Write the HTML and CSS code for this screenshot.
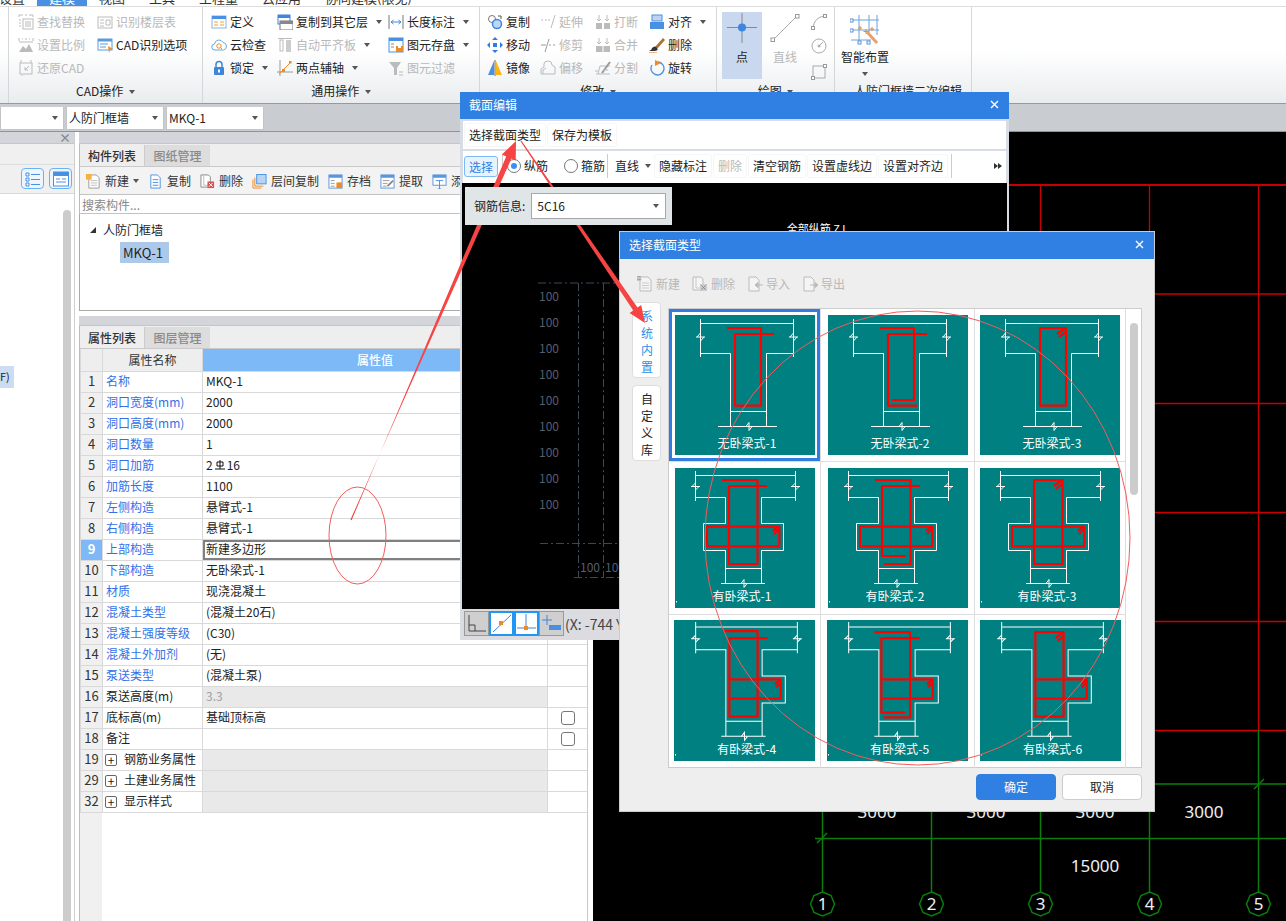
FILE: index.html
```html
<!DOCTYPE html>
<html lang="zh-CN">
<head>
<meta charset="utf-8">
<title>截面编辑</title>
<link rel="stylesheet" href="styles.css">
</head>
<body>
<svg class="defs" width="0" height="0" aria-hidden="true">
  <defs>
    <symbol id="i-find" viewBox="0 0 16 16"><path d="M1 1h4M7 1h2M11 1h4M1 1v2M15 1v2" class="sg"/><rect x="5" y="5" width="10" height="10" class="sg"/><path d="M1 6h2M1 9h2M1 12h2M7 8h6M7 10h6M7 12h6" class="sg"/></symbol>
    <symbol id="i-scale" viewBox="0 0 16 16"><path d="M1 1v3M15 1v3M4 2h1M7 2h2M11 2h1" class="sg"/><path d="M1 15l4-6 3 3 3-5 4 8z" fill="#bbb"/><path d="M1 5h14" class="sg"/></symbol>
    <symbol id="i-restore" viewBox="0 0 16 16"><rect x="2" y="3" width="12" height="11" class="sg"/><path d="M3 0v3M13 0v3M11 6L7 10V7M7 10h3M4 15v1" class="sg"/></symbol>
    <symbol id="i-floor" viewBox="0 0 16 16"><rect x="1" y="3" width="14" height="11" class="sg"/><path d="M3 6h4M3 9h4M3 12h4M9 6h4v5H9z" class="sg"/></symbol>
    <symbol id="i-cad" viewBox="0 0 16 16"><rect x="1" y="2" width="14" height="11" fill="#fff" stroke="#5a9bdc"/><rect x="1" y="2" width="14" height="2.5" fill="#5a9bdc"/><path d="M3 7h8M3 10h6" stroke="#5a9bdc"/><path d="M11 9l5 3-3 1-1 3z" fill="#f08a24"/></symbol>
    <symbol id="i-def" viewBox="0 0 16 16"><rect x="1" y="2" width="14" height="12" fill="#fff" stroke="#8ab4e0"/><rect x="1" y="2" width="14" height="3" fill="#4a90e2"/><path d="M3 8h4M3 11h4" stroke="#f0a040"/><path d="M9 8h4M9 11h4" stroke="#f0a040"/></symbol>
    <symbol id="i-cloud" viewBox="0 0 16 16"><path d="M4 13a3 3 0 0 1-.5-6A4.500 4.500 0 0 1 12 5.500 3.800 3.800 0 0 1 12.500 13z" fill="none" stroke="#60a8e8"/><circle cx="8" cy="9" r="2.200" fill="none" stroke="#f08a24"/><path d="M9.500 10.500L11 12" stroke="#f08a24"/></symbol>
    <symbol id="i-lock" viewBox="0 0 16 16"><path d="M5 7V4.500a3 3 0 0 1 6 0V7" fill="none" stroke="#3d86dc" stroke-width="1.500"/><rect x="3" y="7" width="10" height="8" rx="1" fill="#3d86dc"/><rect x="7" y="9.500" width="2" height="3" fill="#fff"/></symbol>
    <symbol id="i-copyfloor" viewBox="0 0 16 16"><rect x="1" y="1" width="12" height="9" fill="#fff" stroke="#3d86dc"/><rect x="1" y="1" width="12" height="3" fill="#3d86dc"/><rect x="3" y="7" width="13" height="9" fill="#fff" stroke="#777"/><rect x="3" y="7" width="13" height="3" fill="#888"/></symbol>
    <symbol id="i-autoflat" viewBox="0 0 16 16"><path d="M1 1.500h14" class="sg"/><rect x="3" y="3" width="3" height="11" class="sg"/><rect x="9" y="3" width="5" height="12" fill="#ccc"/></symbol>
    <symbol id="i-axis" viewBox="0 0 16 16"><path d="M3 0v16M0 12h16" stroke="#999"/><path d="M14 2L2 14" stroke="#f08a24"/><rect x="12" y="1" width="2.500" height="2.500" fill="#f08a24"/><rect x="5" y="9" width="3" height="3" fill="#f08a24"/></symbol>
    <symbol id="i-len" viewBox="0 0 16 16"><path d="M1 1v14M15 1v14" stroke="#777"/><path d="M3 8h10M3 8l2.500-2M3 8l2.500 2M13 8l-2.500-2M13 8l-2.500 2" fill="none" stroke="#3d86dc"/></symbol>
    <symbol id="i-save" viewBox="0 0 16 16"><rect x="1" y="1" width="14" height="14" fill="#fff" stroke="#4a90e2"/><rect x="1" y="1" width="14" height="3" fill="#4a90e2"/><path d="M3 7h3M3 10h3" stroke="#888"/><rect x="8" y="9" width="7" height="6" fill="#f08a24"/><rect x="10" y="9" width="3" height="2" fill="#fff"/></symbol>
    <symbol id="i-filter" viewBox="0 0 16 16"><path d="M1 2h12L9 8v7H6V8z" fill="#bbb"/><path d="M11 12h4M11 15h4" class="sg"/></symbol>
    <symbol id="i-copy" viewBox="0 0 16 16"><circle cx="5" cy="5" r="3.500" fill="none" stroke="#777"/><circle cx="10" cy="10" r="4.500" fill="#bcd8f5" stroke="#3d86dc" stroke-width="1.500"/><path d="M11 2h3v3" fill="none" stroke="#555"/></symbol>
    <symbol id="i-move" viewBox="0 0 16 16"><path d="M8 0l3 3H5zM8 16l3-3H5zM0 8l3-3v6zM16 8l-3-3v6z" fill="#2f7de1"/><rect x="6" y="6" width="4" height="4" fill="#2f7de1"/></symbol>
    <symbol id="i-mirror" viewBox="0 0 16 16"><path d="M7 1v14H1z" fill="#4a90e2"/><path d="M9 1v14h6z" fill="#fbb812"/><path d="M8 0v16" stroke="#666"/></symbol>
    <symbol id="i-extend" viewBox="0 0 16 16"><path d="M1 6h2M5 6h2M8 6h2" class="sg"/><path d="M15 1L11 14" class="sg"/></symbol>
    <symbol id="i-trim" viewBox="0 0 16 16"><path d="M1 8h5M9 8h2M13 8h2" stroke="#999"/><path d="M9 2L5 15" stroke="#999"/></symbol>
    <symbol id="i-offset" viewBox="0 0 16 16"><path d="M1 14V9l3-2V4q0-3 4-3t4 4l3 2v7z" class="sg"/><path d="M3 14v-4l3-2" class="sg"/></symbol>
    <symbol id="i-break" viewBox="0 0 16 16"><rect x="1" y="9" width="6" height="6" fill="#bbb"/><rect x="9" y="9" width="6" height="6" fill="#bbb"/><path d="M4 1v6M2 5l2 2 2-2M12 1v6M10 5l2 2 2-2" class="sg"/></symbol>
    <symbol id="i-merge" viewBox="0 0 16 16"><rect x="1" y="9" width="14" height="6" fill="#bbb"/><path d="M8 9v6" stroke="#fff"/><path d="M4 1v6M2 5l2 2 2-2M12 1v6M10 5l2 2 2-2" class="sg"/></symbol>
    <symbol id="i-split" viewBox="0 0 16 16"><path d="M1 14h14M3 14l2-8h10" class="sg"/><path d="M7 13L15 2" stroke="#999" stroke-width="2"/><path d="M0 11h3M8 10h5" class="sg"/></symbol>
    <symbol id="i-align" viewBox="0 0 16 16"><rect x="3" y="1" width="10" height="6" fill="#bcd4f2" stroke="#4a90e2"/><rect x="1" y="8" width="14" height="7" fill="#4a90e2"/></symbol>
    <symbol id="i-brush" viewBox="0 0 16 16"><path d="M6 10L14 1l2 2-8 9z" fill="#a8713a"/><path d="M3 11q3-3 5 0t-3 3H0q3-1 3-3z" fill="#333"/><path d="M0 16h8" stroke="#e06a10"/></symbol>
    <symbol id="i-rotate" viewBox="0 0 16 16"><path d="M9 2a6.500 6.500 0 1 1-6 3" fill="none" stroke="#4a90e2" stroke-width="1.300"/><path d="M6 0l6 3-6 3z" fill="#f08a24"/></symbol>
    <symbol id="i-point" viewBox="0 0 30 30"><path d="M0 14.500h30M15 0v30" stroke="#888"/><circle cx="15" cy="14.500" r="4" fill="#3d86dc"/></symbol>
    <symbol id="i-line" viewBox="0 0 30 30"><path d="M3 27L27 3" stroke="#aaa"/><rect x="1" y="25" width="3.500" height="3.500" fill="#fff" stroke="#999"/><rect x="25.500" y="1.500" width="3.500" height="3.500" fill="#fff" stroke="#999"/></symbol>
    <symbol id="i-arc" viewBox="0 0 16 16"><path d="M2 14Q3 3 14 2" fill="none" stroke="#aaa"/><rect x="0.500" y="12.500" width="3" height="3" fill="#fff" stroke="#999"/><rect x="12.500" y="0.500" width="3" height="3" fill="#fff" stroke="#999"/></symbol>
    <symbol id="i-circle" viewBox="0 0 16 16"><circle cx="8" cy="8" r="7" fill="none" stroke="#aaa"/><circle cx="8" cy="8" r="1" fill="none" stroke="#999"/><path d="M8 8l4-4" stroke="#aaa"/></symbol>
    <symbol id="i-rect" viewBox="0 0 16 16"><rect x="2" y="2" width="12" height="12" fill="none" stroke="#aaa"/><rect x="0.500" y="12.500" width="3" height="3" fill="#fff" stroke="#999"/><rect x="12.500" y="0.500" width="3" height="3" fill="#fff" stroke="#999"/></symbol>
    <symbol id="i-smart" viewBox="0 0 30 30"><path d="M1 5h28M1 15h28M1 25h20M9 0v28M19 0v20M27 0v20" stroke="#6aa2e0"/><rect x="0" y="4" width="3" height="3" fill="#fff" stroke="#5a92d8"/><rect x="0" y="14" width="3" height="3" fill="#fff" stroke="#5a92d8"/><rect x="8" y="26" width="3" height="3" fill="#fff" stroke="#5a92d8"/><rect x="17" y="26" width="3" height="3" fill="#fff" stroke="#5a92d8"/><path d="M17 17L27 28" stroke="#e8a070" stroke-width="3"/><path d="M16 14v5M13.500 16.500h5M10 11v4M8 13h4M22 12v4M20 14h4" stroke="#f08a24"/></symbol>
    <symbol id="i-new" viewBox="0 0 16 16"><path d="M3 1h8l3 3v11H3z" fill="#fff" stroke="#999"/><path d="M5 7h7M5 9.500h7M5 12h7" stroke="#bbb"/><rect x="0" y="0" width="6" height="6" fill="#f6b040"/></symbol>
    <symbol id="i-dup" viewBox="0 0 16 16"><path d="M3 1h7l3 3v11H3z" fill="#fff" stroke="#4a90e2"/><path d="M5 6h6M5 9h6M5 12h6" stroke="#4a90e2"/></symbol>
    <symbol id="i-del" viewBox="0 0 16 16"><path d="M1 1h8l2 2v11H1z" fill="#fff" stroke="#888"/><path d="M4 1v11h7" fill="none" stroke="#bbb"/><rect x="8" y="8" width="7" height="7" fill="#d85050"/><path d="M9.500 9.500l4 4M13.500 9.500l-4 4" stroke="#fff"/></symbol>
    <symbol id="i-floorcopy" viewBox="0 0 16 16"><path d="M1 6v9h9M3 4v9h9" fill="none" stroke="#f08a24"/><rect x="5" y="0.500" width="10" height="10" fill="#b8d4f5" stroke="#4a90e2"/></symbol>
    <symbol id="i-archive" viewBox="0 0 16 16"><rect x="1" y="1" width="14" height="14" fill="#fff" stroke="#5a96dc"/><rect x="1" y="1" width="14" height="3" fill="#5a96dc"/><path d="M3 7h4M3 10h4M3 13h4" stroke="#999"/><rect x="9" y="9" width="6" height="6" fill="#f08a24"/></symbol>
    <symbol id="i-extract" viewBox="0 0 16 16"><rect x="1" y="1" width="14" height="14" fill="#fff" stroke="#5a96dc"/><rect x="1" y="1" width="14" height="3" fill="#5a96dc"/><path d="M3 7h7M3 10h5M3 13h4" stroke="#999"/><path d="M8 13l6-6" stroke="#888" stroke-width="2"/></symbol>
    <symbol id="i-add" viewBox="0 0 16 16"><rect x="1" y="1" width="14" height="11" fill="#fff" stroke="#5a96dc"/><rect x="1" y="1" width="14" height="3" fill="#5a96dc"/><path d="M4 7h8M8 7v9M6 16h4" stroke="#4a90e2"/></symbol>
    <symbol id="i-newg" viewBox="0 0 16 16"><path d="M3 1h8l3 3v11H3z" fill="#f4f4f4" stroke="#bbb"/><path d="M5 7h7M5 9.500h7M5 12h7" stroke="#ccc"/><path d="M0 0h4v1H0zM0 3h4v1H0zM1 0v5M3 0v5" stroke="#bbb"/></symbol>
    <symbol id="i-delg" viewBox="0 0 16 16"><path d="M1 1h8l2 2v11H1z" fill="#f4f4f4" stroke="#bbb"/><path d="M4 1v11h7" fill="none" stroke="#ccc"/><rect x="8" y="8" width="7" height="7" fill="#ccc"/><path d="M9.500 9.500l4 4M13.500 9.500l-4 4" stroke="#888"/></symbol>
    <symbol id="i-impg" viewBox="0 0 16 16"><path d="M2 1h7l3 3v11H2z" fill="#f4f4f4" stroke="#bbb"/><path d="M16 9H8M11 6.500L8 9l3 2.500z" fill="#bbb" stroke="#bbb"/></symbol>
    <symbol id="i-expg" viewBox="0 0 16 16"><path d="M2 1h7l3 3v11H2z" fill="#f4f4f4" stroke="#bbb"/><path d="M8 9h8M13 6.500L16 9l-3 2.500z" fill="#bbb" stroke="#bbb"/></symbol>
    <symbol id="i-list" viewBox="0 0 16 16"><path d="M1 2h3v3H1zM1 7h3v3H1zM1 12h3v3H1zM6 3.500h9M6 8.500h9M6 13.500h9" fill="none" stroke="#4a90e2"/></symbol>
    <symbol id="i-card" viewBox="0 0 16 16"><rect x="0.500" y="1" width="15" height="14" fill="#fff" stroke="#4a90e2"/><rect x="0.500" y="1" width="15" height="4" fill="#4a90e2"/><path d="M3 8h4M9 8h4M3 11h10" stroke="#4a90e2"/></symbol>
    <symbol id="i-ortho" viewBox="0 0 25 25"><path d="M5 4v16h17M5 14h6v6" fill="none" stroke="#444"/></symbol>
    <symbol id="i-mid" viewBox="0 0 25 25"><path d="M4 21L22 4" stroke="#3d86dc"/><rect x="10" y="10" width="4" height="4" fill="#f08a24"/></symbol>
    <symbol id="i-perp" viewBox="0 0 25 25"><path d="M3 17h19M12 3v14" stroke="#3d86dc"/><rect x="10" y="15" width="4" height="4" fill="#f08a24"/></symbol>
    <symbol id="i-plus" viewBox="0 0 25 25"><path d="M3 9h10M8 4v10" stroke="#3d86dc"/><rect x="10" y="14" width="12" height="5" fill="#4a90e2"/></symbol>

    <g id="wa" fill="none" stroke="#fff">
      <path d="M25.500 4V42M118.500 4V42M25.500 8.500H118.500M25.500 38.500H55.500V111.500M118.500 38.500H91.500V111.500M55.500 96.500H91.500M43 111.500H102"/>
      <path d="M21 22h9M25.500 18l-3.500 4M25.500 26l3.500-4M114 22h9M118.500 18l-3.500 4M118.500 26l3.500-4M71 111.500l3-4v8l3-4"/>
    </g>
    <g id="wb" fill="none" stroke="#fff">
      <path d="M20.500 3V33M120.500 3V33M20.500 7.500H120.500M20.500 29.500H50.500V55.500H28.500V82.500H50.500V115.500M120.500 29.500H86.500V55.500H108.500V82.500H86.500V115.500M50.500 100.500H86.500M46 115.500H90"/>
      <path d="M16 18.500h9M20.500 15l-3.500 3.500M20.500 22l3.500-3.500M116 18.500h9M120.500 15l-3.500 3.500M120.500 22l3.500-3.500M66 115.500l3-4v8l3-4"/>
      <path d="M1.500 133v1.500"/>
    </g>
    <g id="wc" fill="none" stroke="#fff">
      <path d="M21.500 2V33M122.500 2V33M21.500 7H122.500M21.500 29.500H51.500V115.500M122.500 29.500H87.500V55.500H110.500V82.500H87.500V115.500M51.500 100.500H87.500M47 115.500H91"/>
      <path d="M17 18.500h9M21.500 15l-3.500 3.500M21.500 22l3.500-3.500M118 18.500h9M122.500 15l-3.500 3.500M122.500 22l3.500-3.500M67 115.500l3-4v8l3-4"/>
      <path d="M1.500 133v1.500"/>
    </g>
  </defs>
</svg>

<header class="tabs">
  <span class="tab tab-first">设置</span><span class="tab tab-on">建模</span><span class="tab">视图</span><span class="tab">工具</span><span class="tab">工程量</span><span class="tab">云应用</span><span class="tab">协同建模(限免)</span>
</header>

<section class="ribbon">
  <div class="rb-group rb-cad">
    <div class="rb-cols">
      <div class="rb-item off"><svg class="ic"><use href="#i-find"/></svg>查找替换</div>
      <div class="rb-item off"><svg class="ic"><use href="#i-scale"/></svg>设置比例</div>
      <div class="rb-item off"><svg class="ic"><use href="#i-restore"/></svg>还原CAD</div>
      <div class="rb-item off"><svg class="ic"><use href="#i-floor"/></svg>识别楼层表</div>
      <div class="rb-item"><svg class="ic"><use href="#i-cad"/></svg>CAD识别选项</div>
    </div>
    <div class="rb-label">CAD操作 <i class="caret"></i></div>
  </div>
  <div class="rb-group rb-common">
    <div class="rb-cols">
      <div class="rb-item"><svg class="ic"><use href="#i-def"/></svg>定义</div>
      <div class="rb-item"><svg class="ic"><use href="#i-cloud"/></svg>云检查</div>
      <div class="rb-item"><svg class="ic"><use href="#i-lock"/></svg>锁定<i class="caret"></i></div>
      <div class="rb-item"><svg class="ic"><use href="#i-copyfloor"/></svg>复制到其它层<i class="caret"></i></div>
      <div class="rb-item off"><svg class="ic"><use href="#i-autoflat"/></svg>自动平齐板<i class="caret"></i></div>
      <div class="rb-item"><svg class="ic"><use href="#i-axis"/></svg>两点辅轴<i class="caret"></i></div>
      <div class="rb-item"><svg class="ic"><use href="#i-len"/></svg>长度标注<i class="caret"></i></div>
      <div class="rb-item"><svg class="ic"><use href="#i-save"/></svg>图元存盘<i class="caret"></i></div>
      <div class="rb-item off"><svg class="ic"><use href="#i-filter"/></svg>图元过滤</div>
    </div>
    <div class="rb-label">通用操作 <i class="caret"></i></div>
  </div>
  <div class="rb-group rb-edit">
    <div class="rb-cols">
      <div class="rb-item"><svg class="ic"><use href="#i-copy"/></svg>复制</div>
      <div class="rb-item"><svg class="ic"><use href="#i-move"/></svg>移动</div>
      <div class="rb-item"><svg class="ic"><use href="#i-mirror"/></svg>镜像</div>
      <div class="rb-item off"><svg class="ic"><use href="#i-extend"/></svg>延伸</div>
      <div class="rb-item off"><svg class="ic"><use href="#i-trim"/></svg>修剪</div>
      <div class="rb-item off"><svg class="ic"><use href="#i-offset"/></svg>偏移</div>
      <div class="rb-item off"><svg class="ic"><use href="#i-break"/></svg>打断</div>
      <div class="rb-item off"><svg class="ic"><use href="#i-merge"/></svg>合并</div>
      <div class="rb-item off"><svg class="ic"><use href="#i-split"/></svg>分割</div>
      <div class="rb-item"><svg class="ic"><use href="#i-align"/></svg>对齐<i class="caret"></i></div>
      <div class="rb-item"><svg class="ic"><use href="#i-brush"/></svg>删除</div>
      <div class="rb-item"><svg class="ic"><use href="#i-rotate"/></svg>旋转</div>
    </div>
    <div class="rb-label">修改 <i class="caret"></i></div>
  </div>
  <div class="rb-group rb-draw">
    <div class="rb-draw-body">
      <div class="big big-on"><svg class="ic-big"><use href="#i-point"/></svg>点</div>
      <div class="big off"><svg class="ic-big"><use href="#i-line"/></svg>直线</div>
      <div class="small-col"><svg class="ic"><use href="#i-arc"/></svg><svg class="ic"><use href="#i-circle"/></svg><svg class="ic"><use href="#i-rect"/></svg></div>
    </div>
    <div class="rb-label">绘图 <i class="caret"></i></div>
  </div>
  <div class="rb-group rb-smart">
    <div class="rb-draw-body">
      <div class="big big-smart"><svg class="ic-big"><use href="#i-smart"/></svg>智能布置<i class="caret"></i></div>
    </div>
    <div class="rb-label rb-label-left">人防门框墙二次编辑</div>
  </div>
</section>

<div class="combo-bar">
  <div class="combo combo-a"><i class="caret"></i></div>
  <div class="combo combo-b">人防门框墙<i class="caret"></i></div>
  <div class="combo combo-b">MKQ-1<i class="caret"></i></div>
</div>

<main class="workspace">
  <aside class="left-panel">
    <div class="panel-head"><span class="panel-x">×</span></div>
    <div class="left-row"></div>
    <div class="left-tools">
      <button class="view-btn"><svg class="ic"><use href="#i-list"/></svg></button>
      <button class="view-btn"><svg class="ic"><use href="#i-card"/></svg></button>
    </div>
    <div class="left-list">
      <div class="left-sel">F)</div>
      <div class="left-scroll"></div>
    </div>
  </aside>

  <section class="mid-panel">
    <div class="panel-head"></div>
    <div class="tabstrip"><span class="ptab ptab-on">构件列表</span><span class="ptab">图纸管理</span></div>
    <div class="comp-tools">
      <span class="ct-item ct-first"><svg class="ic15"><use href="#i-new"/></svg>新建<i class="caret"></i></span>
      <span class="ct-item"><svg class="ic15"><use href="#i-dup"/></svg>复制</span>
      <span class="ct-item"><svg class="ic15"><use href="#i-del"/></svg>删除</span>
      <span class="ct-item"><svg class="ic15"><use href="#i-floorcopy"/></svg>层间复制</span>
      <span class="ct-item"><svg class="ic15"><use href="#i-archive"/></svg>存档</span>
      <span class="ct-item"><svg class="ic15"><use href="#i-extract"/></svg>提取</span>
      <span class="ct-item"><svg class="ic15"><use href="#i-add"/></svg>添加</span>
    </div>
    <div class="search">搜索构件...</div>
    <div class="tree">
      <div class="tree-root"><i class="tree-tri"></i>人防门框墙</div>
      <div class="tree-leaf">MKQ-1</div>
    </div>
    <div class="panel-gap"></div>
    <div class="panel-head panel-head-b"></div>
    <div class="tabstrip"><span class="ptab ptab-on">属性列表</span><span class="ptab">图层管理</span></div>
    <div class="prop-wrap">
      <table class="props">
        <colgroup><col class="c-n"><col class="c-name"><col class="c-val"><col class="c-chk"></colgroup>
        <thead><tr><th></th><th>属性名称</th><th class="th-val">属性值</th><th class="th-val"></th></tr></thead>
        <tbody>
          <tr><td class="n">1</td><td class="pn">名称</td><td>MKQ-1</td><td></td></tr>
          <tr><td class="n">2</td><td class="pn">洞口宽度(mm)</td><td>2000</td><td></td></tr>
          <tr><td class="n">3</td><td class="pn">洞口高度(mm)</td><td>2000</td><td></td></tr>
          <tr><td class="n">4</td><td class="pn">洞口数量</td><td>1</td><td></td></tr>
          <tr><td class="n">5</td><td class="pn">洞口加筋</td><td>2<svg class="rebar" viewBox="0 0 10 10"><path d="M2 2h6v4H2zM5 0v9M0 9h10" fill="none" stroke="#111"/></svg>16</td><td></td></tr>
          <tr><td class="n">6</td><td class="pn">加筋长度</td><td>1100</td><td></td></tr>
          <tr><td class="n">7</td><td class="pn">左侧构造</td><td>悬臂式-1</td><td></td></tr>
          <tr><td class="n">8</td><td class="pn">右侧构造</td><td>悬臂式-1</td><td></td></tr>
          <tr><td class="n n-on">9</td><td class="pn">上部构造</td><td class="v-on">新建多边形</td><td></td></tr>
          <tr><td class="n">10</td><td class="pn">下部构造</td><td>无卧梁式-1</td><td></td></tr>
          <tr><td class="n">11</td><td class="pn">材质</td><td>现浇混凝土</td><td></td></tr>
          <tr><td class="n">12</td><td class="pn">混凝土类型</td><td>(混凝土20石)</td><td></td></tr>
          <tr><td class="n">13</td><td class="pn">混凝土强度等级</td><td>(C30)</td><td></td></tr>
          <tr><td class="n">14</td><td class="pn">混凝土外加剂</td><td>(无)</td><td></td></tr>
          <tr><td class="n">15</td><td class="pn">泵送类型</td><td>(混凝土泵)</td><td></td></tr>
          <tr><td class="n">16</td><td>泵送高度(m)</td><td class="v-off">3.3</td><td></td></tr>
          <tr><td class="n">17</td><td>底标高(m)</td><td>基础顶标高</td><td class="chk"><i class="box"></i></td></tr>
          <tr><td class="n">18</td><td>备注</td><td></td><td class="chk"><i class="box"></i></td></tr>
          <tr><td class="n">19</td><td class="grp"><i class="plus">+</i>钢筋业务属性</td><td class="v-grp"></td><td></td></tr>
          <tr><td class="n">29</td><td class="grp"><i class="plus">+</i>土建业务属性</td><td class="v-grp"></td><td></td></tr>
          <tr><td class="n">32</td><td class="grp"><i class="plus">+</i>显示样式</td><td class="v-grp"></td><td></td></tr>
        </tbody>
      </table>
    </div>
  </section>

  <section class="cad-canvas">
    <svg class="cad" viewBox="593 132 693 789">
      <g stroke="#c80000" fill="none">
        <path stroke-width="2" d="M822.500 185H1286"/>
        <path stroke-width="1.600" d="M822.500 294H1286M822.500 403.500H1286M822.500 512.500H1286M822.500 621.500H1286M822.500 730.500H1286"/>
        <path stroke-width="1.300" d="M1040.500 185V730M1149.500 185V730M1258.500 185V730"/>
      </g>
      <g stroke="#0a7d0a" stroke-width="1.500" fill="none">
        <path d="M822.500 730V892M931.500 730V892M1040.500 730V892M1149.500 730V892M1258.500 730V892"/>
        <path d="M815 784H1286M815 838.500H1286"/>
        <path d="M817 843l10-10M1254 789l10-10M1144 789l10-10"/>
        <path d="M822.500 892l8.500 3.500 3.500 8.500-3.500 8.500-8.500 3.500-8.500-3.500-3.500-8.500 3.500-8.500z"/>
        <path d="M931.500 892l8.500 3.500 3.500 8.500-3.500 8.500-8.500 3.500-8.500-3.500-3.500-8.500 3.500-8.500z"/>
        <path d="M1040.500 892l8.500 3.500 3.500 8.500-3.500 8.500-8.500 3.500-8.500-3.500-3.500-8.500 3.500-8.500z"/>
        <path d="M1149.500 892l8.500 3.500 3.500 8.500-3.500 8.500-8.500 3.500-8.500-3.500-3.500-8.500 3.500-8.500z"/>
        <path d="M1258.500 892l8.500 3.500 3.500 8.500-3.500 8.500-8.500 3.500-8.500-3.500-3.500-8.500 3.500-8.500z"/>
      </g>
      <g class="cad-text">
        <text x="877" y="818">3000</text><text x="986" y="818">3000</text><text x="1095" y="818">3000</text><text x="1204" y="818">3000</text>
        <text x="1095" y="872">15000</text>
        <text x="822.500" y="910">1</text><text x="931.500" y="910">2</text><text x="1040.500" y="910">3</text><text x="1149.500" y="910">4</text><text x="1258.500" y="910">5</text>
      </g>
    </svg>
  </section>
</main>

<section class="win win-section">
  <div class="win-title">截面编辑<svg class="close" viewBox="0 0 9 9"><path d="M1 1l7 7M8 1L1 8"/></svg></div>
  <div class="win-menu"><span class="menu-btn">选择截面类型</span><span class="menu-btn">保存为模板</span></div>
  <div class="win-tools">
    <span class="tb-sel">选择</span>
    <i class="tb-sep"></i>
    <span class="radio radio-on"></span><span class="tb-txt">纵筋</span>
    <span class="radio radio-b"></span><span class="tb-txt">箍筋</span>
    <i class="tb-sep tb-sep-b"></i>
    <span class="tb-line">直线<i class="caret"></i></span>
    <span class="tb-btn">隐藏标注</span>
    <span class="tb-btn off">删除</span>
    <span class="tb-btn">清空钢筋</span>
    <span class="tb-btn">设置虚线边</span>
    <span class="tb-btn">设置对齐边</span>
    <i class="tb-sep tb-sep-c"></i>
    <span class="tb-more"><i></i><i></i></span>
  </div>
  <div class="sec-canvas">
    <div class="rebar-info">
      <label class="ri-label">钢筋信息:</label>
      <div class="ri-select">5C16<i class="caret"></i></div>
    </div>
    <svg class="sec-draw" viewBox="462 183 545 426">
      <text class="sec-title" x="816" y="233">全部纵筋 ZJ</text>
      <g class="dash" fill="none">
        <path d="M538 283H620M578.500 283V578M603.500 283V578M540 543.500H620M574 577.500H620"/>
      </g>
      <g class="sec-num">
        <text x="539" y="301">100</text><text x="539" y="327">100</text><text x="539" y="353">100</text><text x="539" y="379">100</text><text x="539" y="405">100</text><text x="539" y="431">100</text><text x="539" y="457">100</text><text x="539" y="483">100</text><text x="539" y="509">100</text>
        <text x="580" y="572">100</text><text x="605" y="572">100</text>
      </g>
    </svg>
  </div>
  <div class="sec-foot">
    <span class="snap"><svg class="ic25"><use href="#i-ortho"/></svg></span>
    <span class="snap snap-on"><svg class="ic25"><use href="#i-mid"/></svg></span>
    <span class="snap snap-on"><svg class="ic25"><use href="#i-perp"/></svg></span>
    <span class="snap"><svg class="ic25"><use href="#i-plus"/></svg></span>
    <span class="coord">(X: -744 Y: -1020)</span>
  </div>
</section>

<section class="win win-type">
  <div class="win-title">选择截面类型<svg class="close" viewBox="0 0 9 9"><path d="M1 1l7 7M8 1L1 8"/></svg></div>
  <div class="type-tools">
    <span class="tt-item"><svg class="ic"><use href="#i-newg"/></svg>新建</span>
    <span class="tt-item"><svg class="ic"><use href="#i-delg"/></svg>删除</span>
    <span class="tt-item"><svg class="ic"><use href="#i-impg"/></svg>导入</span>
    <span class="tt-item"><svg class="ic"><use href="#i-expg"/></svg>导出</span>
  </div>
  <div class="type-main">
    <div class="type-side">
      <button class="side-btn side-on">系统内置</button>
      <button class="side-btn">自定义库</button>
    </div>
    <div class="thumbs">
      <div class="thumb-grid">
        <figure class="cell cell-on"><svg class="th" viewBox="0 0 140 140"><use href="#wa"/><path class="rd" d="M52 13H86V90.700H60V19H99"/><text class="cap" x="72" y="133">无卧梁式-1</text></svg></figure>
        <figure class="cell"><svg class="th" viewBox="0 0 140 140"><use href="#wa"/><path class="rd" d="M52 13H86V85H64M99 19H60V90.700H89"/><text class="cap" x="72" y="133">无卧梁式-2</text></svg></figure>
        <figure class="cell"><svg class="th" viewBox="0 0 140 140"><use href="#wa"/><path class="rd" d="M60 13H86V90.700H60ZM77 19l9-6M79 22l7-5"/><text class="cap" x="72" y="133">无卧梁式-3</text></svg></figure>
        <figure class="cell"><svg class="th" viewBox="0 0 140 140"><use href="#wb"/><path class="rd" d="M47 12H82.500V96H54V18H92M32 58.700H104.300V78.300H32ZM98 63l6-5M99 66l5-5"/><text class="cap" x="67" y="133">有卧梁式-1</text></svg></figure>
        <figure class="cell"><svg class="th" viewBox="0 0 140 140"><use href="#wb"/><path class="rd" d="M47 12H82.500V96H56M92 18H54V88H78M32 58.700H104.300V78.300H32ZM98 63l6-5M99 66l5-5"/><text class="cap" x="67" y="133">有卧梁式-2</text></svg></figure>
        <figure class="cell"><svg class="th" viewBox="0 0 140 140"><use href="#wb"/><path class="rd" d="M54 12H82.500V96H54ZM74 18l8-6M76 21l6-5M32 58.700H104.300V78.300H32ZM98 63l6-5M99 66l5-5"/><text class="cap" x="67" y="133">有卧梁式-3</text></svg></figure>
        <figure class="cell"><svg class="th" viewBox="0 0 140 140"><use href="#wc"/><path class="rd" d="M49 11H83V96H55V18H93M55 59H106V78H55M100 64l6-5M101 67l5-5"/><text class="cap" x="72" y="133">有卧梁式-4</text></svg></figure>
        <figure class="cell"><svg class="th" viewBox="0 0 140 140"><use href="#wc"/><path class="rd" d="M47 12H82.500V96.700H56M92 18H54V92H78M54 59H105V78H54M99 64l6-5M100 67l5-5"/><text class="cap" x="72" y="133">有卧梁式-5</text></svg></figure>
        <figure class="cell"><svg class="th" viewBox="0 0 140 140"><use href="#wc"/><path class="rd" d="M55 12H83V96H55ZM75 18l8-6M77 21l6-5M55 59H106V78H55M100 64l6-5M101 67l5-5"/><text class="cap" x="72" y="133">有卧梁式-6</text></svg></figure>
      </div>
      <div class="thumb-scroll"><i></i></div>
    </div>
  </div>
  <div class="type-foot">
    <button class="btn btn-ok">确定</button>
    <button class="btn">取消</button>
  </div>
</section>

<svg class="marks" viewBox="0 0 1286 921">
  <ellipse cx="357.500" cy="535.500" rx="28.500" ry="48.500"/>
  <ellipse cx="917.500" cy="538" rx="212.500" ry="227"/>
  <polygon points="351.600,520.200 506.200,156.400 501.900,154.500 516,141 515.700,160.500 511.400,158.600 350.400,519.800"/>
  <polygon points="520.500,141.300 633.300,310.400 629.600,312.900 645,323 641.200,305.100 637.500,307.600 521.500,140.700"/>
</svg>
</body>
</html>
```

FILE: styles.css
```css
* { box-sizing: border-box; }
html, body { margin: 0; padding: 0; }
body {
  position: relative;
  width: 1286px;
  height: 921px;
  overflow: hidden;
  display: flex;
  flex-direction: column;
  background: #fff;
  color: #222;
  font: 12px/16px "Noto Sans CJK SC", "Liberation Sans", sans-serif;
}
button { font: inherit; margin: 0; }
i { font-style: normal; }
.defs { position: absolute; }
.sg { fill: none; stroke: #bbb; }
.ic { width: 16px; height: 16px; flex: none; display: block; }
.ic15 { width: 15px; height: 15px; flex: none; display: block; }
.ic25 { width: 25px; height: 25px; display: block; }
.ic-big { width: 30px; height: 30px; display: block; }
.caret {
  display: inline-block;
  width: 0;
  height: 0;
  border: 3px solid transparent;
  border-top: 4px solid #555;
  border-bottom: 0;
  flex: none;
}
.off { color: #b8b8b8; }

/* top tabs: only the lower edge of their labels shows above the ribbon */
.tabs {
  height: 7px;
  flex: none;
  overflow: hidden;
  display: flex;
  border-bottom: 1px solid #ddd;
  background: #fff;
}
.tab {
  padding: 0 12px;
  height: 10px;
  margin-top: -3px;
  font-size: 13px;
  line-height: 1px;
  color: #333;
  white-space: nowrap;
}
.tab-first { margin-left: -13px; }
.tab-on { background: #4a90e2; color: #fff; }

/* ribbon */
.ribbon {
  height: 97px;
  flex: none;
  display: flex;
  padding-left: 8px;
  background: linear-gradient(#fff 0, #fff 45%, #e9ecee 100%);
  border-bottom: 1px solid #96999e;
}
.rb-group {
  display: flex;
  flex-direction: column;
  border-left: 1px solid #d4d6d9;
}
.rb-cols {
  height: 73px;
  padding-top: 3px;
  display: grid;
  grid-auto-flow: column;
  grid-template-rows: repeat(3, 23px);
}
.rb-cad { width: 194px; }
.rb-cad .rb-cols { padding-left: 9px; grid-template-columns: 79px 1fr; }
.rb-common { width: 277px; }
.rb-common .rb-cols { padding-left: 8px; grid-template-columns: 66px 111px 1fr; }
.rb-edit { width: 237px; }
.rb-edit .rb-cols { padding-left: 7px; grid-template-columns: 53px 55px 54px 1fr; }
.rb-draw { width: 118px; }
.rb-smart { width: 138px; border-right: 1px solid #d4d6d9; }
.rb-item { display: flex; align-items: center; gap: 3px; white-space: nowrap; }
.rb-item .caret { margin-left: 5px; }
.rb-label {
  height: 23px;
  text-align: center;
  line-height: 22px;
  white-space: nowrap;
}
.rb-label .caret { margin-left: 3px; vertical-align: 2px; }
.rb-label-left { text-align: left; padding-left: 19px; }
.rb-draw-body { height: 73px; display: flex; padding: 5px 0 0 5px; gap: 3px; }
.big {
  width: 40px;
  height: 67px;
  padding-top: 1px;
  display: flex;
  flex-direction: column;
  align-items: center;
  gap: 6px;
}
.big-on { background: #c9d8ee; color: #222; }
.big-smart { width: 50px; padding-top: 3px; gap: 4px; color: #222; white-space: nowrap; }
.big-smart .caret { margin-top: 3px; }
.small-col { display: flex; flex-direction: column; gap: 8px; padding: 2px 0 0 3px; }
.small-col .ic:last-child { margin-top: 2px; }

/* combo bar */
.combo-bar {
  height: 28px;
  flex: none;
  display: flex;
  gap: 2px;
  padding-top: 3px;
  background: #c9ccd1;
  border-bottom: 1px solid #8f9297;
}
.combo {
  height: 23px;
  display: flex;
  align-items: center;
  justify-content: space-between;
  padding: 0 5px 0 2px;
  background: #fff;
  border: 1px solid #c4c4c4;
  border-top: 0;
}
.combo-a { width: 64px; justify-content: flex-end; }
.combo-b { width: 98px; }

/* workspace */
.workspace {
  flex: 1;
  min-height: 0;
  display: grid;
  grid-template-columns: 75px 518px 1fr;
}
.panel-head { height: 12px; background: #d3d5da; position: relative; border-bottom: 1px solid #c4c6ca; }
.panel-x { position: absolute; right: 3px; top: -2px; color: #888; font-size: 12px; line-height: 16px; font-weight: 700; }
.left-panel { display: flex; flex-direction: column; border-right: 1px solid #cfcfcf; min-height: 0; }
.left-row { height: 21px; background: #f0f0f0; border-bottom: 1px solid #ddd; }
.left-tools { height: 29px; background: #f0f0f0; border-bottom: 1px solid #d8d8d8; display: flex; justify-content: flex-end; gap: 5px; padding: 3px 2px 0 0; }
.view-btn { width: 23px; height: 21px; padding: 0; display: flex; align-items: center; justify-content: center; background: #eef5fd; border: 1px solid #6bb2f5; border-radius: 4px; }
.left-list { flex: 1; position: relative; background: #fff; padding-top: 172px; }
.left-sel { width: 14px; height: 22px; background: #cbdcf3; line-height: 20px; font-size: 11px; }
.left-scroll { position: absolute; left: 63px; top: 16px; bottom: 0; width: 8px; background: #ccc; border-radius: 4px 4px 0 0; }

.mid-panel { display: flex; flex-direction: column; margin-left: 4px; min-height: 0; padding-right: 5px; border-right: 1px solid #fff; position: relative; }
.mid-panel::after { content: ""; position: absolute; top: 0; bottom: 0; right: 4px; width: 1px; background: #c9c9c9; }
.tabstrip { height: 23px; flex: none; display: flex; background: #eee; border-left: 1px solid #bbb; border-bottom: 1px solid #c9c9c9; padding-top: 1px; }
.ptab { width: 65px; text-align: center; line-height: 21px; height: 21px; color: #8a8a8a; background: #ddd; font-weight: 500; font-size: 12px; }
.ptab-on { background: #eee; color: #333; border-right: 1px solid #ccc; }
.comp-tools { height: 27px; flex: none; display: flex; align-items: center; gap: 9px; padding: 1px 0 0 6px; background: #f3f3f3; border-left: 1px solid #bbb; white-space: nowrap; overflow: hidden; }
.ct-item { display: flex; align-items: center; gap: 4px; color: #333; }
.search { height: 20px; flex: none; padding-left: 2px; line-height: 19px; color: #888; background: #fff; border: 1px solid #c2c2c2; border-width: 1px 0 1px 1px; border-left-color: #bbb; }
.tree { height: 97px; flex: none; background: #fff; border: 1px solid #aaa; border-width: 0 0 1px 1px; padding-top: 6px; }
.tree-root { display: flex; align-items: center; height: 20px; padding-left: 10px; gap: 7px; }
.tree-tri { width: 0; height: 0; border-style: solid; border-width: 0 0 6px 6px; border-color: transparent transparent #333 transparent; }
.tree-leaf { width: 49px; height: 21px; margin: 2px 0 0 40px; padding-left: 3px; line-height: 21px; background: #adc9ea; font-size: 13px; }
.panel-gap { height: 5px; flex: none; }
.panel-head-b { height: 10px; }
.prop-wrap { flex: 1; min-height: 0; border-left: 1px solid #bbb; background: linear-gradient(#f0f0f0, #f0f0f0) no-repeat 0 0 / 22px 100%, #fff; }
.props { border-collapse: collapse; table-layout: fixed; width: 507px; }
.c-n { width: 22px; }
.c-name { width: 100px; }
.c-val { width: 345px; }
.c-chk { width: 40px; }
.props th, .props td { height: 21px; padding: 0 3px; font-weight: 400; border: 1px solid #d9d9d9; border-left-width: 1px; white-space: nowrap; line-height: 18px; overflow: hidden; }
.props td { padding-bottom: 2px; }
.props thead th { height: 22px; padding-top: 1px; background: #eee; text-align: center; color: #333; border-top: 0; }
.props thead .th-val { background: #7db8f7; color: #fff; font-weight: 500; }
.props .n { background: #f0f0f0; text-align: center; padding: 0 0 2px; color: #333; font-size: 13px; }
.props .n-on { background: #7fb8f6; color: #fff; font-weight: 700; }
.props .pn { color: #3370e8; }
.props .v-on { box-shadow: inset 0 0 0 2px #808080; }
.props .v-off { background: #e9e9e9; color: #a0a0a0; }
.props .v-grp { background: #e9e9e9; }
.props .grp { padding-left: 1px; }
.plus { display: inline-block; width: 12px; height: 12px; margin: 0 7px 0 1px; border: 1px solid #666; border-radius: 2px; text-align: center; line-height: 9px; font-size: 12px; vertical-align: -1px; }
.chk { text-align: center; }
.box { display: inline-block; width: 14px; height: 14px; border: 1px solid #777; border-radius: 3px; background: #fff; vertical-align: middle; }
.rebar { width: 10px; height: 10px; margin: 0 2px; vertical-align: 0; }

.cad-canvas { background: #000; min-height: 0; overflow: hidden; }
.cad { display: block; width: 693px; height: 789px; }
.cad-text text { fill: #f0f0f0; font-family: "Noto Sans", sans-serif; font-size: 17px; text-anchor: middle; }

/* windows */
.win { position: absolute; display: flex; flex-direction: column; }
.win-title { height: 27px; flex: none; display: flex; align-items: center; justify-content: space-between; padding: 0 10px 2px 9px; background: #2f80e2; color: #fff; }
.close { width: 9px; height: 9px; stroke: #fff; stroke-width: 1.4; fill: none; }

.win-section { left: 460px; top: 92px; width: 549px; height: 548px; background: #d8dce4; }
.win-menu { height: 28px; flex: none; margin: 2px 3px 0; display: flex; align-items: center; gap: 1px; padding-left: 1px; background: #fff; }
.menu-btn { height: 24px; padding: 0 5px; line-height: 24px; border-radius: 3px; box-shadow: 0 0 0 1px #f6f6f6 inset; }
.win-tools { height: 32px; flex: none; margin: 2px 3px 0; display: flex; align-items: center; padding: 0 0 2px 1px; background: #fff; white-space: nowrap; }
.tb-sel { width: 34px; height: 21px; text-align: center; line-height: 20px; color: #2f80e2; background: #e9f3fe; border: 1px solid #7db8f7; border-radius: 3px; }
.tb-sep { width: 1px; height: 24px; margin-left: 4px; background: #ccc; }
.tb-sep-b { margin-left: 2px; }
.tb-sep-c { margin-left: 3px; }
.radio { width: 14px; height: 14px; margin: 0 3px 0 4px; border: 1px solid #777; border-radius: 50%; background: #fff; flex: none; position: relative; }
.radio-on::after { content: ""; position: absolute; left: 3px; top: 3px; width: 6px; height: 6px; border-radius: 50%; background: #3d8ff0; }
.radio-b { margin-left: 16px; }
.tb-txt { width: 24px; }
.tb-line { margin-left: 7px; display: flex; align-items: center; gap: 6px; }
.tb-btn { height: 24px; margin-left: 1px; padding: 0 5px; line-height: 24px; border-radius: 3px; box-shadow: 0 0 0 1px #f6f6f6 inset; }
.tb-line + .tb-btn { margin-left: 3px; }
.tb-more { margin-left: auto; margin-right: 4px; display: flex; }
.tb-more i { width: 0; height: 0; border: 3px solid transparent; border-left: 4px solid #333; border-right: 0; }
.sec-canvas { height: 426px; flex: none; margin: 0 2px; position: relative; background: #000; padding: 4px 0 0 3px; }
.rebar-info { position: relative; z-index: 1; width: 207px; height: 38px; display: flex; align-items: center; background: #e0e6e8; padding-left: 9px; gap: 6px; }
.ri-select { width: 135px; height: 26px; display: flex; align-items: center; justify-content: space-between; padding: 0 6px 0 5px; background: #fff; border: 1px solid #a8a8a8; }
.sec-draw { position: absolute; left: 0; top: 0; width: 545px; height: 426px; }
.sec-title { fill: #fff; font-size: 11px; text-anchor: middle; }
.dash { stroke: #3f4656; stroke-dasharray: 8 3 2 3; }
.sec-num text { fill: #565d6e; font-size: 12px; }
.sec-foot { height: 30px; flex: none; margin: 0 2px; display: flex; align-items: center; padding: 0 0 1px 2px; background: #dcdce0; overflow: hidden; white-space: nowrap; }
.snap { width: 25px; height: 25px; background: #cfcfcf; border: 1px solid #999; flex: none; }
.snap .ic25 { margin: -1px; }
.snap-on { background: #fff; border: 2px solid #2196f3; }
.snap-on .ic25 { margin: -2px; }
.coord { margin-left: 1px; font-size: 14px; color: #444; }

.win-type { left: 620px; top: 232px; width: 534px; height: 579px; background: #eee; padding-bottom: 11px; box-shadow: 0 0 0 1px #ccc; }
.type-tools { height: 43px; flex: none; display: flex; align-items: center; padding: 7px 0 0 17px; }
.tt-item { width: 55px; display: flex; align-items: center; gap: 3px; color: #b8b8b8; }
.type-main { flex: 1; min-height: 0; display: flex; padding: 0 12px 0 12px; gap: 7px; }
.type-side { width: 29px; display: flex; flex-direction: column; gap: 7px; }
.side-btn { width: 29px; height: 76px; padding: 2px 8px 0; line-height: 17px; background: #fff; border: 1px solid #ddd; border-radius: 4px; color: #222; word-break: break-all; }
.side-on { color: #2f8fe8; }
.thumbs { width: 474px; height: 460px; margin-top: 6px; display: flex; background: #fff; border: 1px solid #ccc; }
.thumb-grid { display: grid; grid-template-columns: 152px 154px 151px; grid-template-rows: repeat(3, 153px); }
.cell { margin: 0; display: flex; align-items: center; justify-content: center; border-right: 1px solid #ddd; border-bottom: 1px solid #ddd; }
.cell:nth-child(n+7) { border-bottom: 0; align-items: flex-start; padding-top: 5px; }
.cell:nth-child(n+7) .th { width: 141px; height: 141px; }
.cell-on { box-shadow: inset 0 0 0 3px #2f7de1; }
.th { width: 140px; height: 140px; display: block; background: #008080; }
.rd { fill: none; stroke: #f00; stroke-width: 2.200; stroke-linejoin: round; }
.cap { fill: #fff; font-size: 12px; text-anchor: middle; }
.thumb-scroll { flex: 1; padding: 14px 0 0 4px; }
.thumb-scroll i { display: block; width: 8px; height: 172px; border-radius: 4px; background: #ccc; }
.type-foot { height: 32px; flex: none; display: flex; justify-content: flex-end; gap: 6px; padding: 6px 12px 0 0; }
.btn { width: 80px; height: 26px; padding: 0; background: #fff; border: 1px solid #ccc; border-radius: 4px; color: #222; }
.btn-ok { background: #2f80e2; border-color: #2f80e2; color: #fff; }

/* hand-drawn red markup over the whole picture */
.marks { position: absolute; left: 0; top: 0; width: 1286px; height: 921px; pointer-events: none; }
.marks ellipse { fill: none; stroke: #f25c5c; stroke-width: 1; }
.marks polygon { fill: #f64444; }
```
